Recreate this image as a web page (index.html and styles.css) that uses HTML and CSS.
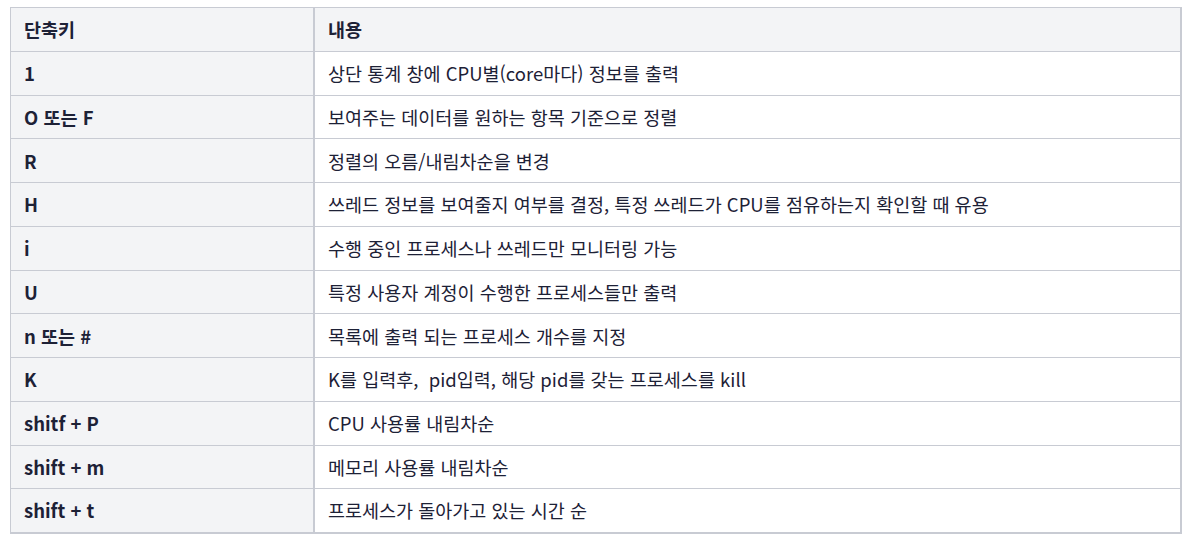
FILE: index.html
```html
<!DOCTYPE html>
<html lang="ko">
<head>
<meta charset="utf-8">
<link rel="stylesheet" href="styles.css">
</head>
<body>
<div class="wrap">
<table class="keys">
<thead>
<tr><th class="k">단축키</th><th class="d">내용</th></tr>
</thead>
<tbody>
<tr><td class="k">1</td><td class="d">상단 통계 창에 CPU별(core마다) 정보를 출력</td></tr>
<tr><td class="k">O 또는 F</td><td class="d">보여주는 데이터를 원하는 항목 기준으로 정렬</td></tr>
<tr><td class="k">R</td><td class="d">정렬의 오름/내림차순을 변경</td></tr>
<tr><td class="k">H</td><td class="d">쓰레드 정보를 보여줄지 여부를 결정, 특정 쓰레드가 CPU를 점유하는지 확인할 때 유용</td></tr>
<tr><td class="k">i</td><td class="d">수행 중인 프로세스나 쓰레드만 모니터링 가능</td></tr>
<tr><td class="k">U</td><td class="d">특정 사용자 계정이 수행한 프로세스들만 출력</td></tr>
<tr><td class="k">n 또는 #</td><td class="d">목록에 출력 되는 프로세스 개수를 지정</td></tr>
<tr><td class="k">K</td><td class="d">K를 입력후,&nbsp; pid입력, 해당 pid를 갖는 프로세스를 kill</td></tr>
<tr><td class="k">shitf + P</td><td class="d">CPU 사용률 내림차순</td></tr>
<tr><td class="k">shift + m</td><td class="d">메모리 사용률 내림차순</td></tr>
<tr><td class="k">shift + t</td><td class="d">프로세스가 돌아가고 있는 시간 순</td></tr>
</tbody>
</table>
</div>
</body>
</html>
```

FILE: styles.css
```css
html, body {
  margin: 0;
  padding: 0;
  background: #ffffff;
}
.wrap {
  padding: 7px 0 0 10px;
}
.keys {
  border-collapse: collapse;
  width: 1172px;
  font-family: "Noto Sans CJK KR", sans-serif;
  font-size: 18.5px;
  color: #1d2136;
  border-top: 1px solid #c8cbd3;
  border-left: 1px solid #c8cbd3;
  border-right: 2px solid #c8cbd3;
  border-bottom: 2px solid #c8cbd3;
}
.keys tr {
  height: 43.75px;
}
.keys th, .keys td {
  border-top: 1px solid #c8cbd3;
  border-bottom: 1px solid #c8cbd3;
  padding: 0 13px;
  text-align: left;
  vertical-align: middle;
  white-space: nowrap;
  line-height: 1.2;
}
.keys .k {
  width: 276px;
  background: #f3f4f6;
  font-weight: 700;
  border-right: 2px solid #c8cbd3;
}
.keys th {
  font-weight: 700;
  background: #f3f4f6;
}
.keys .d {
  font-weight: 400;
}
.keys th.d {
  font-weight: 700;
}
```
